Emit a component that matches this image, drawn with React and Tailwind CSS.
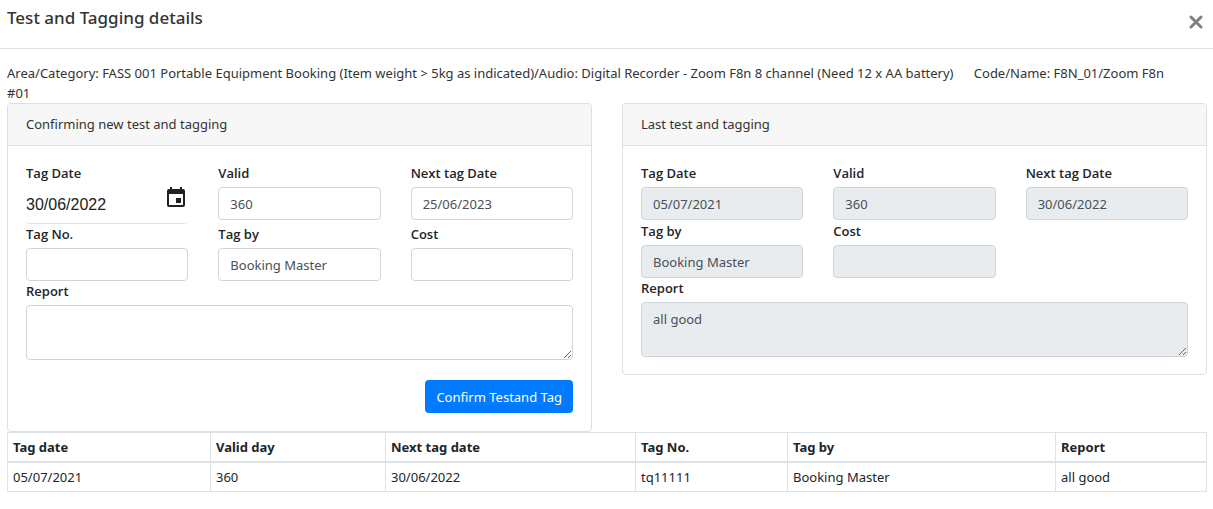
import { useState } from "react"
import clsx from "clsx"

const history = [
  { date: "05/07/2021", valid: "360", next: "30/06/2022", no: "tq11111", by: "Booking Master", report: "all good" },
]

function Label({ htmlFor, children }) {
  return (
    <label htmlFor={htmlFor} className="block mb-1 leading-5 font-semibold text-[#212529] font-['Open_Sans',sans-serif]">
      {children}
    </label>
  )
}

function Field({ id, label, value, readOnly }) {
  return (
    <div>
      <Label htmlFor={id}>{label}</Label>
      <input
        id={id}
        type="text"
        defaultValue={value}
        readOnly={readOnly}
        className={clsx(
          "block w-full h-[33px] px-[11px] border border-[#ced4da] rounded-[4px] text-[#495057] outline-none",
          readOnly ? "bg-[#e9ecef]" : "bg-white"
        )}
      />
    </div>
  )
}

function ReportField({ id, value, readOnly }) {
  return (
    <div>
      <Label htmlFor={id}>Report</Label>
      <textarea
        id={id}
        defaultValue={value}
        readOnly={readOnly}
        className={clsx(
          "block w-full h-[55px] px-[11px] py-1.5 leading-5 border border-[#ced4da] rounded-[4px] text-[#495057] outline-none resize",
          readOnly ? "bg-[#e9ecef]" : "bg-white"
        )}
      />
    </div>
  )
}

function DateField({ id, label }) {
  const [date, setDate] = useState("30/06/2022")

  return (
    <div>
      <Label htmlFor={id}>{label}</Label>
      <div className="flex items-start h-[37px] border-b border-[#e3e3e3] rounded-[4px]">
        <input
          id={id}
          type="text"
          value={date}
          onChange={e => setDate(e.target.value)}
          className="flex-1 min-w-0 h-[35px] text-base text-[#212121] outline-none font-['Liberation_Sans',sans-serif]"
        />
        <button type="button" aria-label="Choose date" className="shrink-0 text-[#212121]">
          <svg className="w-6 h-5" viewBox="0 1 24 20" fill="currentColor">
            <path d="M17 12h-5v5h5v-5zM16 1v2H8V1H6v2H5c-1.110 0-1.990.9-1.990 2L3 19c0 1.100.89 2 2 2h14c1.100 0 2-.9 2-2V5c0-1.100-.9-2-2-2h-1V1h-2zm3 18H5V8h14v11z" />
          </svg>
        </button>
      </div>
    </div>
  )
}

function Card({ title, children }) {
  return (
    <section className="border border-[#dfdfdf] rounded-[4px] bg-white">
      <h2 className="px-[18px] py-2.5 leading-[21px] bg-[#f7f7f7] border-b border-[#dfdfdf] rounded-t-[3px]">{title}</h2>
      <div className="px-[18px] py-[17px]">{children}</div>
    </section>
  )
}

export default function App() {
  return (
    <div className="bg-white text-[#333] text-[13px] leading-5 font-['Noto_Sans',sans-serif]">
      {/* Header */}
      <header className="flex justify-between items-start h-[49px] pl-[7px] pr-2.5 border-b border-[#dee2e6]">
        <h1 className="pt-1.5 text-[17px] leading-6 font-medium">Test and Tagging details</h1>
        <button type="button" aria-label="Close" className="pt-[15px] text-[#7f7f7f]">
          <svg className="w-3.5 h-3.5" viewBox="0 0 14 14" stroke="currentColor" strokeWidth="3" strokeLinecap="round">
            <path d="M2 2l10 10M12 2L2 12" />
          </svg>
        </button>
      </header>

      <main className="pl-[7px] pr-1.5 pt-3.5">
        <p className="pr-5">
          Area/Category: FASS 001 Portable Equipment Booking (Item weight &gt; 5kg as indicated)/Audio: Digital Recorder - Zoom F8n 8 channel (Need 12 x AA battery)&nbsp;&nbsp;&nbsp;&nbsp;&nbsp; Code/Name: F8N_01/Zoom F8n #01
        </p>

        <div className="grid grid-cols-2 items-start gap-x-[30px]">
          {/* New tagging */}
          <Card title="Confirming new test and tagging">
            <form onSubmit={e => e.preventDefault()}>
              <div className="grid grid-cols-3 gap-x-[30px]">
                <DateField id="new-date" label="Tag Date" />
                <Field id="new-valid" label="Valid" value="360" />
                <Field id="new-next" label="Next tag Date" value="25/06/2023" />
                <Field id="new-no" label="Tag No." />
                <Field id="new-by" label="Tag by" value="Booking Master" />
                <Field id="new-cost" label="Cost" />
              </div>
              <ReportField id="new-report" />
              <div className="flex justify-end mt-5 mb-px">
                <button type="submit" className="h-[33px] px-[11px] rounded-[4px] bg-[#007bff] text-white">
                  Confirm Testand Tag
                </button>
              </div>
            </form>
          </Card>

          {/* Previous tagging */}
          <Card title="Last test and tagging">
            <div className="grid grid-cols-3 gap-x-[30px] gap-y-px">
              <Field id="last-date" label="Tag Date" value="05/07/2021" readOnly />
              <Field id="last-valid" label="Valid" value="360" readOnly />
              <Field id="last-next" label="Next tag Date" value="30/06/2022" readOnly />
              <Field id="last-by" label="Tag by" value="Booking Master" readOnly />
              <Field id="last-cost" label="Cost" readOnly />
            </div>
            <ReportField id="last-report" value="all good" readOnly />
          </Card>
        </div>

        {/* History */}
        <table className="w-full table-fixed border-collapse text-left text-[#212529] [&_th]:border [&_td]:border [&_th]:border-[#dee2e6] [&_td]:border-[#dee2e6] [&_th]:px-[5px] [&_td]:px-[5px] [&_th]:py-1 [&_td]:py-1">
          <thead>
            <tr className="[&>th]:border-b-2">
              <th className="w-[203px]">Tag date</th>
              <th className="w-[175px]">Valid day</th>
              <th className="w-[250px]">Next tag date</th>
              <th className="w-[152px]">Tag No.</th>
              <th className="w-[268px]">Tag by</th>
              <th className="w-[151px]">Report</th>
            </tr>
          </thead>
          <tbody>
            {history.map(row => (
              <tr key={row.no}>
                <td>{row.date}</td>
                <td>{row.valid}</td>
                <td>{row.next}</td>
                <td>{row.no}</td>
                <td>{row.by}</td>
                <td>{row.report}</td>
              </tr>
            ))}
          </tbody>
        </table>
      </main>
    </div>
  )
}
